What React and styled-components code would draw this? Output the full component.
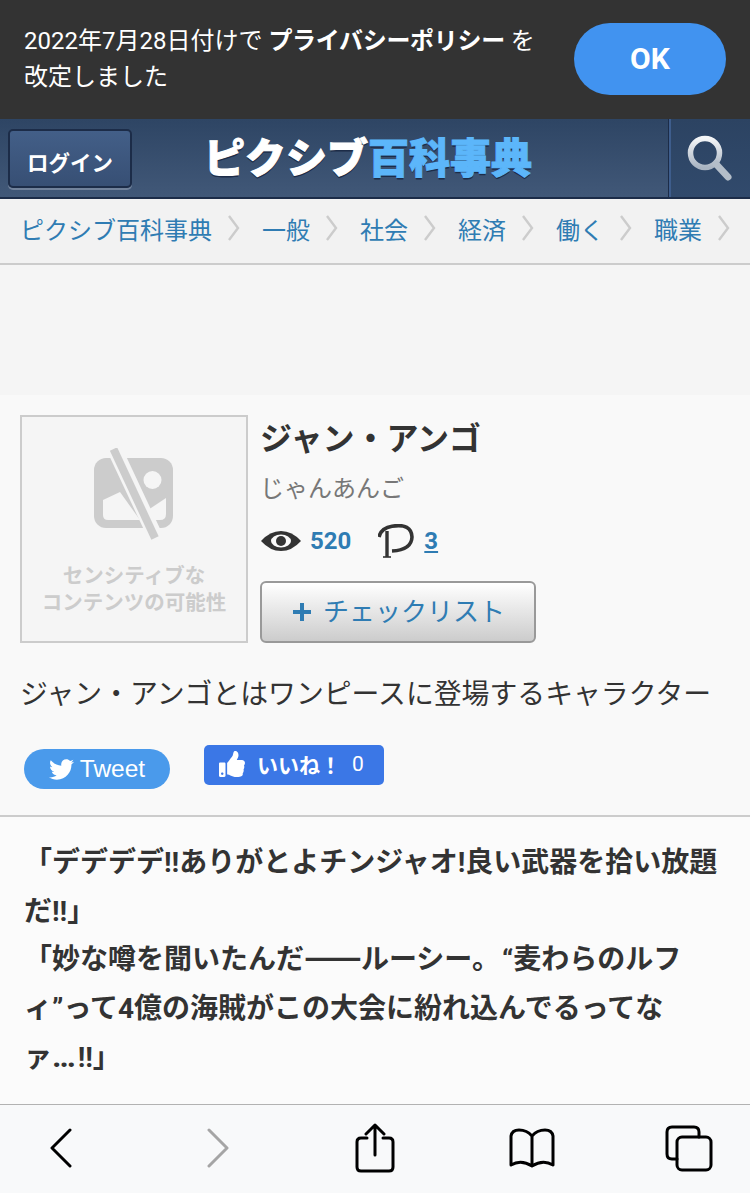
import React from "react"
import styled, { createGlobalStyle } from "styled-components"
import { FaTwitter, FaThumbsUp } from "react-icons/fa"

const GlobalStyle = createGlobalStyle`
    html, body {
        margin: 0;
        padding: 0;
        background: #f9f9f9;
    }
    * {
        box-sizing: border-box;
    }
`
const Page = styled.div`
    width: 750px;
    height: 1193px;
    display: flex;
    flex-direction: column;
    overflow: hidden;
    font-family: "Roboto", "Noto Sans CJK JP", sans-serif;
    color: #333;
`
const Notice = styled.div`
    height: 119px;
    flex: none;
    background: #333;
    display: flex;
    align-items: center;
    justify-content: space-between;
    padding: 0 24px 2px;
`
const NoticeText = styled.p`
    margin: 0;
    color: #fff;
    font-size: 24px;
    line-height: 36px;
    white-space: nowrap;
    b {
        font-weight: 700;
        letter-spacing: -0.3px;
    }
`
const OkButton = styled.button`
    width: 152px;
    height: 72px;
    border: 0;
    border-radius: 36px;
    background: #4193f0;
    color: #fff;
    font: 700 30px "Roboto", sans-serif;
`
const Header = styled.header`
    height: 80px;
    flex: none;
    display: flex;
    background: linear-gradient(#2e4564, #415878);
    border-bottom: 2px solid #1c2c48;
`
const HeaderMain = styled.div`
    flex: 1;
    display: flex;
    align-items: center;
    padding-left: 8px;
`
const LoginButton = styled.button`
    width: 124px;
    height: 59px;
    border: 2px solid #1c2c48;
    border-radius: 5px;
    background: linear-gradient(#435f88, #374f74);
    box-shadow: 0 2px 0 #71829b;
    color: #fff;
    font: 700 21.5px "Noto Sans CJK JP", sans-serif;
    padding: 6px 0 0;
`
const Logo = styled.div`
    margin: 0 0 6px 72px;
    font-family: "Noto Sans CJK JP", sans-serif;
    font-weight: 900;
    font-size: 41px;
    line-height: 48px;
    white-space: nowrap;
    color: #fff;
    -webkit-text-stroke: 1px currentColor;
    text-shadow: 0 2px 0 #1c2c48;
    span {
        color: #5cb6fa;
    }
`
const SearchCell = styled.div`
    width: 81px;
    flex: none;
    display: flex;
    align-items: center;
    justify-content: center;
    padding-right: 2px;
    background: linear-gradient(#2c4362, #314a6c);
    border-left: 2px solid #3e5d8c;
    box-shadow: -1px 0 0 #1c2c48;
`
const Crumbs = styled.nav`
    height: 66px;
    flex: none;
    display: flex;
    align-items: center;
    padding: 0 0 6px 20px;
    background: #f2f2f2;
    border-bottom: 2px solid #ccc;
`
const Crumb = styled.a`
    font-size: 24px;
    color: #2f7cb3;
    white-space: nowrap;
`
const CrumbArrow = styled.svg`
    width: 14px;
    height: 26px;
    margin: 0 21px 0 15px;
    flex: none;
`
const AdSpace = styled.div`
    height: 130px;
    flex: none;
    background: #f5f5f5;
`
const Summary = styled.section`
    flex: none;
    height: 422px;
    padding: 20px 24px 0 20px;
    background: #f9f9f9;
    border-bottom: 2px solid #ccc;
`
const Profile = styled.div`
    display: flex;
    gap: 12px;
`
const Thumb = styled.div`
    width: 228px;
    height: 228px;
    flex: none;
    display: flex;
    flex-direction: column;
    align-items: center;
    padding-top: 31px;
    background: #f5f5f5;
    border: 2px solid #ccc;
`
const ThumbText = styled.div`
    margin-top: 23px;
    color: #ccc;
    font-size: 20.5px;
    font-weight: 700;
    line-height: 27px;
    text-align: center;
    white-space: nowrap;
`
const Info = styled.div`
    display: flex;
    flex-direction: column;
    align-items: flex-start;
`
const Title = styled.h1`
    margin: 1px 0 0 0;
    font-size: 32px;
    font-weight: 700;
    line-height: 46px;
    color: #333;
`
const Reading = styled.div`
    margin-top: 9px;
    font-size: 24px;
    line-height: 36px;
    color: #777;
`
const Stats = styled.div`
    display: flex;
    align-items: center;
    gap: 27px;
    height: 40px;
    margin: 14px 0 0 1px;
`
const StatGroup = styled.div`
    display: flex;
    align-items: center;
    gap: ${(p) => p.$gap}px;
`
const Count = styled.a`
    font-size: 24px;
    font-weight: 700;
    color: #2f7cb3;
    text-decoration: ${(p) => (p.$under ? "underline" : "none")};
`
const CheckButton = styled.button`
    width: 276px;
    height: 62px;
    margin-top: 20px;
    display: flex;
    align-items: center;
    justify-content: center;
    gap: 11px;
    padding: 0 0 5px 1px;
    border: 2px solid #999;
    border-radius: 6px;
    background: linear-gradient(#fff, #ccc);
    color: #2f7cb3;
    font: 400 26px "Noto Sans CJK JP", sans-serif;
    svg {
        margin-top: 5px;
    }
`
const Description = styled.p`
    margin: 29px 0 0 0;
    font-size: 27.85px;
    line-height: 46px;
    white-space: nowrap;
    color: #333;
`
const Share = styled.div`
    display: flex;
    align-items: flex-start;
    gap: 34px;
    margin: 27px 0 0 4px;
`
const TweetButton = styled.a`
    width: 146px;
    height: 40px;
    margin-top: 4px;
    display: flex;
    align-items: center;
    justify-content: center;
    gap: 6px;
    border-radius: 20px;
    background: #4a9aeb;
    color: #fff;
    font: 400 24.5px "Liberation Sans", sans-serif;
`
const LikeButton = styled.a`
    width: 180px;
    height: 40px;
    display: flex;
    align-items: center;
    padding: 0 0 2px 15px;
    border-radius: 5px;
    background: #3b77e6;
    color: #fff;
    font-size: 21px;
    font-weight: 700;
    white-space: nowrap;
    svg {
        margin-right: 12px;
    }
`
const LikeCount = styled.span`
    margin-left: 11px;
    font-weight: 400;
`
const Article = styled.article`
    flex: 1;
    min-height: 0;
    padding: 22px 0 0 24px;
    background: #fbfbfb;
`
const Quote = styled.p`
    margin: 0;
    font-size: 28px;
    font-weight: 700;
    line-height: 48.7px;
    white-space: nowrap;
    color: #333;
`
const Dash = styled.span`
    font-family: "Noto Sans CJK JP", sans-serif;
    font-size: 34px;
    line-height: 1;
    margin-right: -1px;
`
const QuoteMark = styled.span`
    margin-left: 2px;
`
const Dots = styled.span`
    font-size: 32px;
    line-height: 1;
    margin-right: 2px;
`
const Toolbar = styled.footer`
    height: 89px;
    flex: none;
    background: #f8f9fa;
    border-top: 1px solid #b2b2b2;
    display: grid;
    grid-template-columns: repeat(5, 157px);
    justify-content: center;
    align-items: center;
    justify-items: center;
    padding-bottom: 2px;
`
const ToolIcon = styled.svg`
    display: block;
    fill: none;
    stroke: ${(p) => p.$color || "#000"};
    stroke-width: 3;
    stroke-linecap: round;
    stroke-linejoin: round;
`

const crumbs = ["ピクシブ百科事典", "一般", "社会", "経済", "働く", "職業"]

const SearchIcon = () => (
    <svg width="46" height="47" viewBox="0 0 46 47">
        <defs>
            <linearGradient id="lens" x1="0" y1="0" x2="0" y2="1">
                <stop offset="0" stopColor="#f4f6f8" />
                <stop offset="1" stopColor="#a9b4c2" />
            </linearGradient>
        </defs>
        <circle cx="18" cy="18" r="14.5" fill="none" stroke="url(#lens)" strokeWidth="5.5" />
        <line x1="29" y1="29" x2="41" y2="42" stroke="#b4bec9" strokeWidth="7" strokeLinecap="round" />
    </svg>
)

const HiddenIcon = () => (
    <svg width="80" height="92" viewBox="0 0 80 92">
        <rect x="0" y="10" width="79" height="70" rx="12" fill="#ccc" />
        <path d="M9 52 L26 44 L46 72 L14 72 Q9 72 9 67 Z" fill="#f5f5f5" />
        <path d="M54 62 L72 50 L72 66 Q72 72 66 72 L60 72 Z" fill="#f5f5f5" />
        <circle cx="58.5" cy="32" r="9" fill="#f5f5f5" />
        <line x1="19" y1="-2" x2="63" y2="92" stroke="#f5f5f5" strokeWidth="15" />
        <line x1="19.5" y1="1" x2="61" y2="90" stroke="#ccc" strokeWidth="8" />
    </svg>
)

const EyeIcon = () => (
    <svg width="40" height="22" viewBox="0 0 40 22">
        <path d="M0 11 Q9 1 20 1 Q31 1 40 11 Q31 21 20 21 Q9 21 0 11 Z" fill="#333" />
        <ellipse cx="20" cy="11" rx="10" ry="6.5" fill="#f9f9f9" />
        <circle cx="20" cy="11" r="5" fill="#333" />
    </svg>
)

const PixivIcon = () => (
    <svg width="36" height="34" viewBox="0 0 36 34" fill="none" stroke="#333">
        <path d="M1 13 Q3 4 14 2.2 Q33.5 -1 34 13 Q33.5 26 14 27" strokeWidth="3.6" />
        <path d="M9 7 L9 33" strokeWidth="3.4" />
        <path d="M5 33 L13 33" strokeWidth="1.6" />
    </svg>
)

const App = () => {
    return (
        <Page>
            <GlobalStyle />
            <Notice>
                <NoticeText>
                    2022年7月28日付けで <b>プライバシーポリシー</b> を
                    <br />
                    改定しました
                </NoticeText>
                <OkButton>OK</OkButton>
            </Notice>
            <Header>
                <HeaderMain>
                    <LoginButton>ログイン</LoginButton>
                    <Logo>
                        ピクシブ<span>百科事典</span>
                    </Logo>
                </HeaderMain>
                <SearchCell>
                    <SearchIcon />
                </SearchCell>
            </Header>
            <Crumbs>
                {crumbs.map((c) => (
                    <React.Fragment key={c}>
                        <Crumb>{c}</Crumb>
                        <CrumbArrow viewBox="0 0 14 26" fill="none">
                            <polyline points="2,1 11,13 2,25" stroke="#ccc" strokeWidth="2.4" />
                        </CrumbArrow>
                    </React.Fragment>
                ))}
            </Crumbs>
            <AdSpace />
            <Summary>
                <Profile>
                    <Thumb>
                        <HiddenIcon />
                        <ThumbText>
                            センシティブな
                            <br />
                            コンテンツの可能性
                        </ThumbText>
                    </Thumb>
                    <Info>
                        <Title>ジャン・アンゴ</Title>
                        <Reading>じゃんあんご</Reading>
                        <Stats>
                            <StatGroup $gap={9}>
                                <EyeIcon />
                                <Count>520</Count>
                            </StatGroup>
                            <StatGroup $gap={10}>
                                <PixivIcon />
                                <Count $under>3</Count>
                            </StatGroup>
                        </Stats>
                        <CheckButton>
                            <svg width="20" height="20" viewBox="0 0 20 20">
                                <path d="M10 1 V19 M1 10 H19" stroke="#2f7cb3" strokeWidth="4" />
                            </svg>
                            チェックリスト
                        </CheckButton>
                    </Info>
                </Profile>
                <Description>ジャン・アンゴとはワンピースに登場するキャラクター</Description>
                <Share>
                    <TweetButton>
                        <FaTwitter size={25} />
                        Tweet
                    </TweetButton>
                    <LikeButton>
                        <FaThumbsUp size={26} />
                        いいね！
                        <LikeCount>0</LikeCount>
                    </LikeButton>
                </Share>
            </Summary>
            <Article>
                <Quote>
                    「デデデデ‼ありがとよチンジャオ!良い武器を拾い放題
                    <br />
                    だ‼」
                    <br />
                    「妙な噂を聞いたんだ<Dash>——</Dash>ルーシー。<QuoteMark>“</QuoteMark>麦わらのルフ
                    <br />
                    ィ”って4億の海賊がこの大会に紛れ込んでるってな
                    <br />
                    ァ<Dots>…</Dots>‼」
                </Quote>
            </Article>
            <Toolbar>
                <ToolIcon width="24" height="40" viewBox="0 0 24 40">
                    <polyline points="21,2 3,20 21,38" />
                </ToolIcon>
                <ToolIcon width="24" height="40" viewBox="0 0 24 40" $color="#a5a5a5">
                    <polyline points="3,2 21,20 3,38" />
                </ToolIcon>
                <ToolIcon width="40" height="50" viewBox="0 0 40 50">
                    <path d="M12 15 H6 Q2 15 2 19 V44 Q2 48 6 48 H34 Q38 48 38 44 V19 Q38 15 34 15 H28" />
                    <path d="M20 32 V2 M11 11 L20 2 L29 11" />
                </ToolIcon>
                <ToolIcon width="46" height="40" viewBox="0 0 46 40">
                    <path d="M23 8 Q18 2 10 2 Q3 2 2 8 V37 Q12 31 23 38 Q34 31 44 37 V8 Q43 2 36 2 Q28 2 23 8 Z M23 8 V38" />
                </ToolIcon>
                <ToolIcon width="48" height="47" viewBox="0 0 48 47">
                    <path d="M12 34 H7 Q2 34 2 29 V7 Q2 2 7 2 H29 Q34 2 34 7 V12" />
                    <rect x="12" y="12" width="34" height="33" rx="5" />
                </ToolIcon>
            </Toolbar>
        </Page>
    )
}

export default App
